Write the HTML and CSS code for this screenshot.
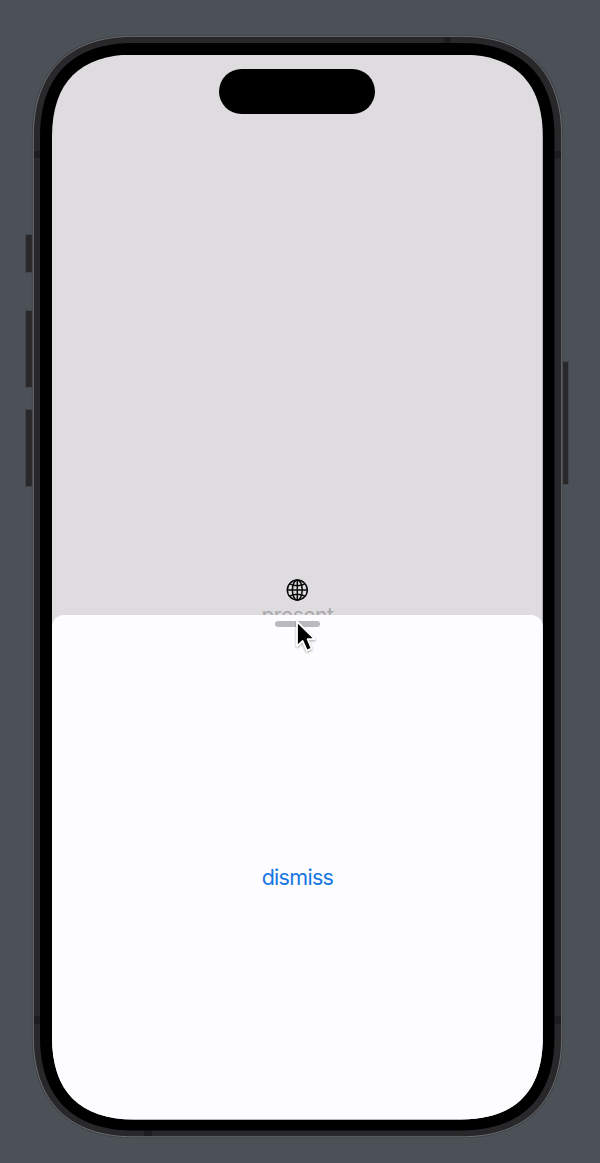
FILE: index.html
```html
<!DOCTYPE html>
<html lang="en">
<head>
<meta charset="utf-8">
<title>Sheet presentation</title>
<link rel="stylesheet" href="styles.css">
</head>
<body>
<main class="stage">
  <svg class="device" viewBox="0 0 600 1163" aria-hidden="true">
    <defs>
      <path id="shell" d="M33.300 136.300C33.300 71.800 68.800 36.300 133.300 36.300H461.700C526.200 36.300 561.700 71.800 561.700 136.300V1036.800C561.700 1101.300 526.200 1136.800 461.700 1136.800H133.300C68.800 1136.800 33.300 1101.300 33.300 1036.800Z"/>
    </defs>
    <g fill="#28272a" stroke="#42464a" stroke-width="1">
      <rect x="25.500" y="234.500" width="9" height="38"/>
      <rect x="25.500" y="310.500" width="9" height="77"/>
      <rect x="25.500" y="409.500" width="9" height="77"/>
      <rect x="560.500" y="361.500" width="8" height="123"/>
    </g>
    <use href="#shell" fill="#28272a" stroke="#3f4347" stroke-width="3"/>
    <use href="#shell" fill="#28272a" stroke="#6c6d70" stroke-width="1"/>
    <g fill="#1d1d20">
      <rect x="34" y="151" width="6" height="7"/>
      <rect x="555" y="151" width="6" height="7"/>
      <rect x="34" y="1016" width="6" height="8"/>
      <rect x="555" y="1016" width="6" height="8"/>
      <rect x="444" y="37" width="7" height="6"/>
      <rect x="144" y="1130" width="8" height="6"/>
    </g>
    <path d="M40 136C40 76 73 43 133 43H461.500C521.500 43 554.500 76 554.500 136V1037.500C554.500 1097.500 521.500 1130.500 461.500 1130.500H133C73 1130.500 40 1097.500 40 1037.500Z"/>
  </svg>
  <section class="screen">
    <div class="presenter">
      <div class="island"></div>
      <div class="content">
        <svg class="globe" viewBox="0 0 22 22" fill="none" stroke="#09090a" stroke-width="1.500" aria-hidden="true">
          <circle cx="11.300" cy="11" r="10"/>
          <ellipse cx="11.300" cy="11" rx="4.900" ry="10"/>
          <path d="M11.300 1V21M1.300 11H21.300M3.700 4.800Q11.300 8.600 18.900 4.800M3.700 17.200Q11.300 13.400 18.900 17.200"/>
        </svg>
        <span class="present">present</span>
      </div>
    </div>
    <div class="sheet">
      <div class="grabber"></div>
      <button class="dismiss">dismiss</button>
    </div>
  </section>
  <svg class="cursor" viewBox="0 0 24 36" aria-hidden="true">
    <path d="M2 2.500V27.200L7.700 22L11.800 31.600L16.600 29.500L12.600 20.200H19.800Z" fill="#000" stroke="#fff" stroke-width="1.800" stroke-linejoin="round"/>
  </svg>
</main>
</body>
</html>
```
FILE: styles.css
```css
body {
  margin: 0;
  background: #4b5157;
  font-family: Inter, "Liberation Sans", sans-serif;
}
.stage {
  position: relative;
  box-sizing: border-box;
  width: 600px;
  height: 1163px;
  padding: 54.500px 57.200px 43.500px 52px;
  overflow: hidden;
}
.device {
  position: absolute;
  inset: 0;
  width: 600px;
  height: 1163px;
}
.screen {
  position: relative;
  display: flex;
  flex-direction: column;
  height: 1065px;
  background: #dedcdf;
  clip-path: path("M0 82C0 28 28 0 82 0H408.800C462.800 0 490.800 28 490.800 82V983C490.800 1037 462.800 1065 408.800 1065H82C28 1065 0 1037 0 983Z");
}
.presenter {
  display: flex;
  flex-direction: column;
  align-items: center;
  justify-content: space-between;
  height: 560.500px;
}
.island {
  width: 156px;
  height: 45.500px;
  margin-top: 14px;
  border-radius: 23px;
  background: #000;
}
.content {
  display: flex;
  flex-direction: column;
  align-items: center;
  height: 36px;
}
.globe {
  flex: none;
  width: 22px;
  height: 22px;
  overflow: visible;
}
.present {
  padding-top: 2px;
  color: #aaa8ab;
  font-size: 21px;
  letter-spacing: -.5px;
  line-height: 26px;
}
.sheet {
  position: relative;
  display: flex;
  flex: 1;
  flex-direction: column;
  align-items: center;
  background: #fdfcff;
  border-radius: 12px 12px 0 0;
}
.grabber {
  width: 45px;
  height: 6px;
  margin-top: 6px;
  border-radius: 3px;
  background: #bab9bd;
}
.dismiss {
  margin-top: 236px;
  padding: 0;
  border: 0;
  background: none;
  color: #1676e3;
  font: inherit;
  font-size: 21.500px;
  letter-spacing: -.7px;
  line-height: 28px;
}
.cursor {
  position: absolute;
  left: 295px;
  top: 619px;
  width: 24px;
  height: 36px;
  filter: drop-shadow(0 1px 1px rgba(0, 0, 0, .35));
}
```
